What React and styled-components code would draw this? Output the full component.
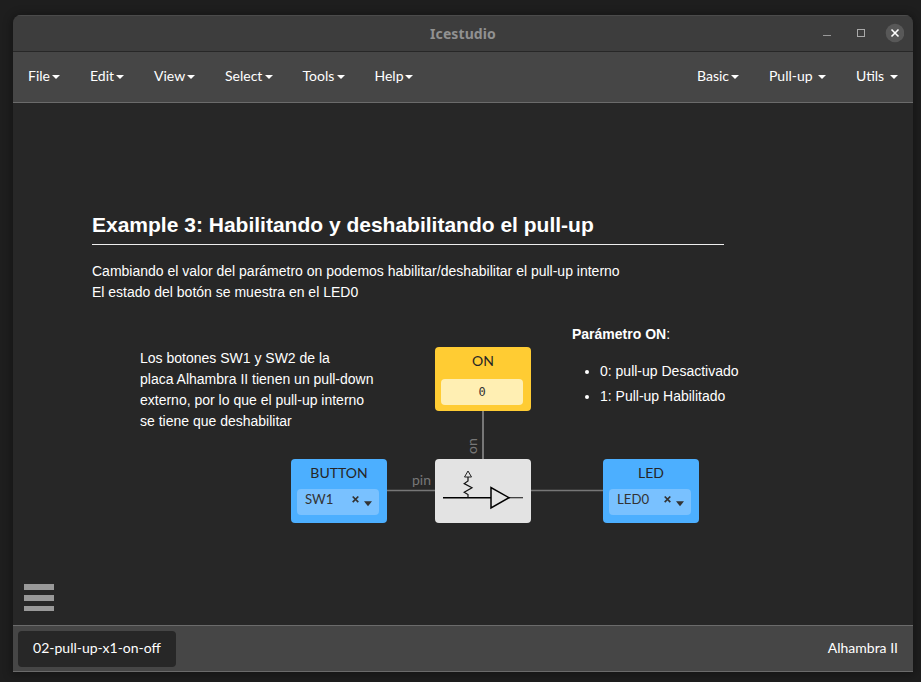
import React from 'react';
import styled, { createGlobalStyle } from 'styled-components';

const GlobalStyle = createGlobalStyle`
  * { box-sizing: border-box; }
  body {
    margin: 0;
    background: #1e1e1e;
    font-family: Lato, sans-serif;
    font-size: 14px;
    color: #fff;
    overflow: hidden;
  }
`;

const Desktop = styled.div`
  height: 682px;
  padding: 15px 8px 10px 13px;
  background: #1e1e1e;
`;

const Window = styled.div`
  display: flex;
  flex-direction: column;
  height: 657px;
  border-radius: 8px 8px 0 0;
  overflow: hidden;
  background: #272727;
  box-shadow: 0 1px 8px 2px rgba(0, 0, 0, 0.3);
`;

const TitleBar = styled.header`
  display: grid;
  grid-template-columns: 1fr auto 1fr;
  align-items: center;
  height: 37px;
  background: #3d3d3d;
  border-top: 1px solid #4b4b4b;
  border-bottom: 1px solid #272727;
`;

const Title = styled.h1`
  grid-column: 2;
  margin: 0;
  font: bold 14px/20px 'Noto Sans', sans-serif;
  letter-spacing: 0.1px;
  color: #919191;
`;

const WindowButtons = styled.div`
  display: flex;
  justify-content: flex-end;
  padding: 0 9px 1px 0;
`;

const NavBar = styled.nav`
  display: flex;
  justify-content: space-between;
  height: 51px;
  background: #464646;
  border-bottom: 1px solid #6b6b6b;
`;

const MenuGroup = styled.div`
  display: flex;
`;

const MenuItem = styled.div`
  display: flex;
  align-items: center;
  height: 47px;
  width: ${(p) => p.$width}px;
  padding: 0 15px;
  justify-content: space-between;
  white-space: nowrap;
`;

const Caret = styled.span`
  border: 4px solid transparent;
  border-top-color: #fff;
  border-bottom: 0;
  margin-top: 3px;
`;

const Canvas = styled.main`
  position: relative;
  flex: 1;
  background: #272727;
`;

const Note = styled.section`
  position: absolute;
  left: ${(p) => p.$x}px;
  top: ${(p) => p.$y}px;
  width: ${(p) => p.$width}px;
  font: 14px/21px 'Liberation Sans', Arial, sans-serif;
  white-space: nowrap;

  p { margin: 0; }
`;

const Heading = styled.h2`
  margin: 0 0 16px;
  height: 35px;
  font-size: 21px;
  line-height: 29px;
  border-bottom: 1px solid #eee;
`;

const Bullets = styled.ul`
  margin: 14px 0 0;
  padding-left: 28px;
  line-height: 25px;
`;

const Wires = styled.svg`
  position: absolute;
  left: 0;
  top: 0;
`;

const Port = styled.span`
  position: absolute;
  left: ${(p) => p.$x}px;
  top: ${(p) => p.$y}px;
  line-height: 16px;
  color: #777;
  transform: ${(p) => (p.$vertical ? 'rotate(-90deg)' : 'none')};
`;

const Block = styled.div`
  position: absolute;
  left: ${(p) => p.$x}px;
  top: ${(p) => p.$y}px;
  width: 96px;
  height: 64px;
  padding: 5px 8px 0 6px;
  border-radius: 4px;
  background: ${(p) => p.$color};
  color: #333;
`;

const BlockLabel = styled.div`
  height: ${(p) => p.$height}px;
  padding-left: 2px;
  text-align: center;
  line-height: 18px;
  color: #262626;
`;

const ValueField = styled.div`
  height: 26px;
  border-radius: 4px;
  background: #ffefb3;
  text-align: center;
  font: 12px/27px 'DejaVu Sans Mono', monospace;
`;

const SelectField = styled.div`
  display: flex;
  height: 26px;
  padding: 0 7px 0 8px;
  border-radius: 4px;
  background: #79c1ff;
  line-height: 20px;
`;

const SelectValue = styled.span`
  flex: 1;
  font-size: 13.2px;
`;

const MENU_LEFT = [['File', 62], ['Edit', 64], ['View', 71], ['Select', 77.5], ['Tools', 72], ['Help', 68.5]];
const MENU_RIGHT = [['Basic', 72], ['Pull-up', 87], ['Utils', 72]];

const Menu = ({ items }) => (
  <MenuGroup>
    {items.map(([label, width]) => (
      <MenuItem key={label} $width={width}>{label}<Caret /></MenuItem>
    ))}
  </MenuGroup>
);

const PinBlock = ({ x, y, label, pin }) => (
  <Block $x={x} $y={y} $color="#4cafff">
    <BlockLabel $height={25}>{label}</BlockLabel>
    <SelectField>
      <SelectValue>{pin}</SelectValue>
      <svg width="22" height="22" viewBox="0 0 22 22">
        <path d="M2.7 7.5l5.6 5.6M8.3 7.5l-5.6 5.6" stroke="#333" strokeWidth="1.7" />
        <path d="M14 12.3h8l-4 4.9z" fill="#333" />
      </svg>
    </SelectField>
  </Block>
);

const Hamburger = styled.button`
  position: absolute;
  left: 11px;
  bottom: 14px;
  width: 30px;
  height: 27px;
  padding: 0;
  border: 0;
  background: none;
  display: flex;
  flex-direction: column;
  justify-content: space-between;
`;

const HamburgerBar = styled.span`
  width: 30px;
  height: ${(p) => p.$height}px;
  background: #999;
`;

const Footer = styled.footer`
  display: flex;
  align-items: center;
  justify-content: space-between;
  height: 47px;
  padding: 0 15px 0 5px;
  background: #464646;
  border: solid #6b6b6b;
  border-width: 1px 0;
`;

const ProjectTab = styled.div`
  width: 158px;
  height: 36px;
  border-radius: 4px;
  background: #272727;
  text-align: center;
  line-height: 33px;
`;

const BoardName = styled.span`
  padding-bottom: 2px;
`;

export default function App() {
  return (
    <>
      <GlobalStyle />
      <Desktop>
        <Window>
          <TitleBar>
            <Title>Icestudio</Title>
            <WindowButtons>
              <svg width="82" height="20" viewBox="0 0 82 20" fill="none">
                <path d="M1 12.5h8" stroke="#999" />
                <rect x="35.5" y="6.5" width="7" height="7" stroke="#aaa" />
                <circle cx="73" cy="10" r="9.3" fill="#585858" />
                <path d="M69.5 6.5l7 7M76.5 6.5l-7 7" stroke="#fff" strokeWidth="1.6" />
              </svg>
            </WindowButtons>
          </TitleBar>
          <NavBar>
            <Menu items={MENU_LEFT} />
            <Menu items={MENU_RIGHT} />
          </NavBar>
          <Canvas>
            <Wires width="900" height="522">
              <path d="M470 308v48" stroke="#777" strokeWidth="2" />
              <path d="M374 387.5h48M518 387.5h72" stroke="#777" strokeWidth="1.5" />
            </Wires>
            <Note $x={79} $y={107} $width={632}>
              <Heading>Example 3: Habilitando y deshabilitando el pull-up</Heading>
              <p>Cambiando el valor del parámetro on podemos habilitar/deshabilitar el pull-up interno</p>
              <p>El estado del botón se muestra en el LED0</p>
            </Note>
            <Note $x={127} $y={245} $width={250}>
              <p>Los botones SW1 y SW2 de la<br />placa Alhambra II tienen un pull-down<br />externo, por lo que el pull-up interno<br />se tiene que deshabilitar</p>
            </Note>
            <Note $x={559} $y={221} $width={200}>
              <p><b>Parámetro ON</b>:</p>
              <Bullets>
                <li>0: pull-up Desactivado</li>
                <li>1: Pull-up Habilitado</li>
              </Bullets>
            </Note>
            <Port $x={399} $y={369}>pin</Port>
            <Port $x={451} $y={335} $vertical>on</Port>
            <Block $x={422} $y={244} $color="#ffcc33">
              <BlockLabel $height={27}>ON</BlockLabel>
              <ValueField>0</ValueField>
            </Block>
            <PinBlock x={278} y={356} label="BUTTON" pin="SW1" />
            <PinBlock x={590} y={356} label="LED" pin="LED0" />
            <Block $x={422} $y={356} $color="#e3e3e3">
              <svg width="82" height="54" viewBox="0 0 82 54" fill="none" stroke="#000">
                <path d="M2 33.7h48" strokeWidth="1.5" />
                <path d="M67.5 33.7H82" stroke="#333" strokeWidth="1.2" />
                <path d="M50 23.5v20.5l18-10.3z" strokeWidth="1.5" />
                <path d="M27 7l-3.5 6h7z" stroke="#222" />
                <path d="M27 13v4l-3.8 2.6 7.8 4.2-7.8 4.4 3.8 2.3v3" stroke="#111" strokeWidth="1.2" />
              </svg>
            </Block>
            <Hamburger aria-label="Menu">
              <HamburgerBar $height={6} />
              <HamburgerBar $height={6} />
              <HamburgerBar $height={5} />
            </Hamburger>
          </Canvas>
          <Footer>
            <ProjectTab>02-pull-up-x1-on-off</ProjectTab>
            <BoardName>Alhambra II</BoardName>
          </Footer>
        </Window>
      </Desktop>
    </>
  );
}
